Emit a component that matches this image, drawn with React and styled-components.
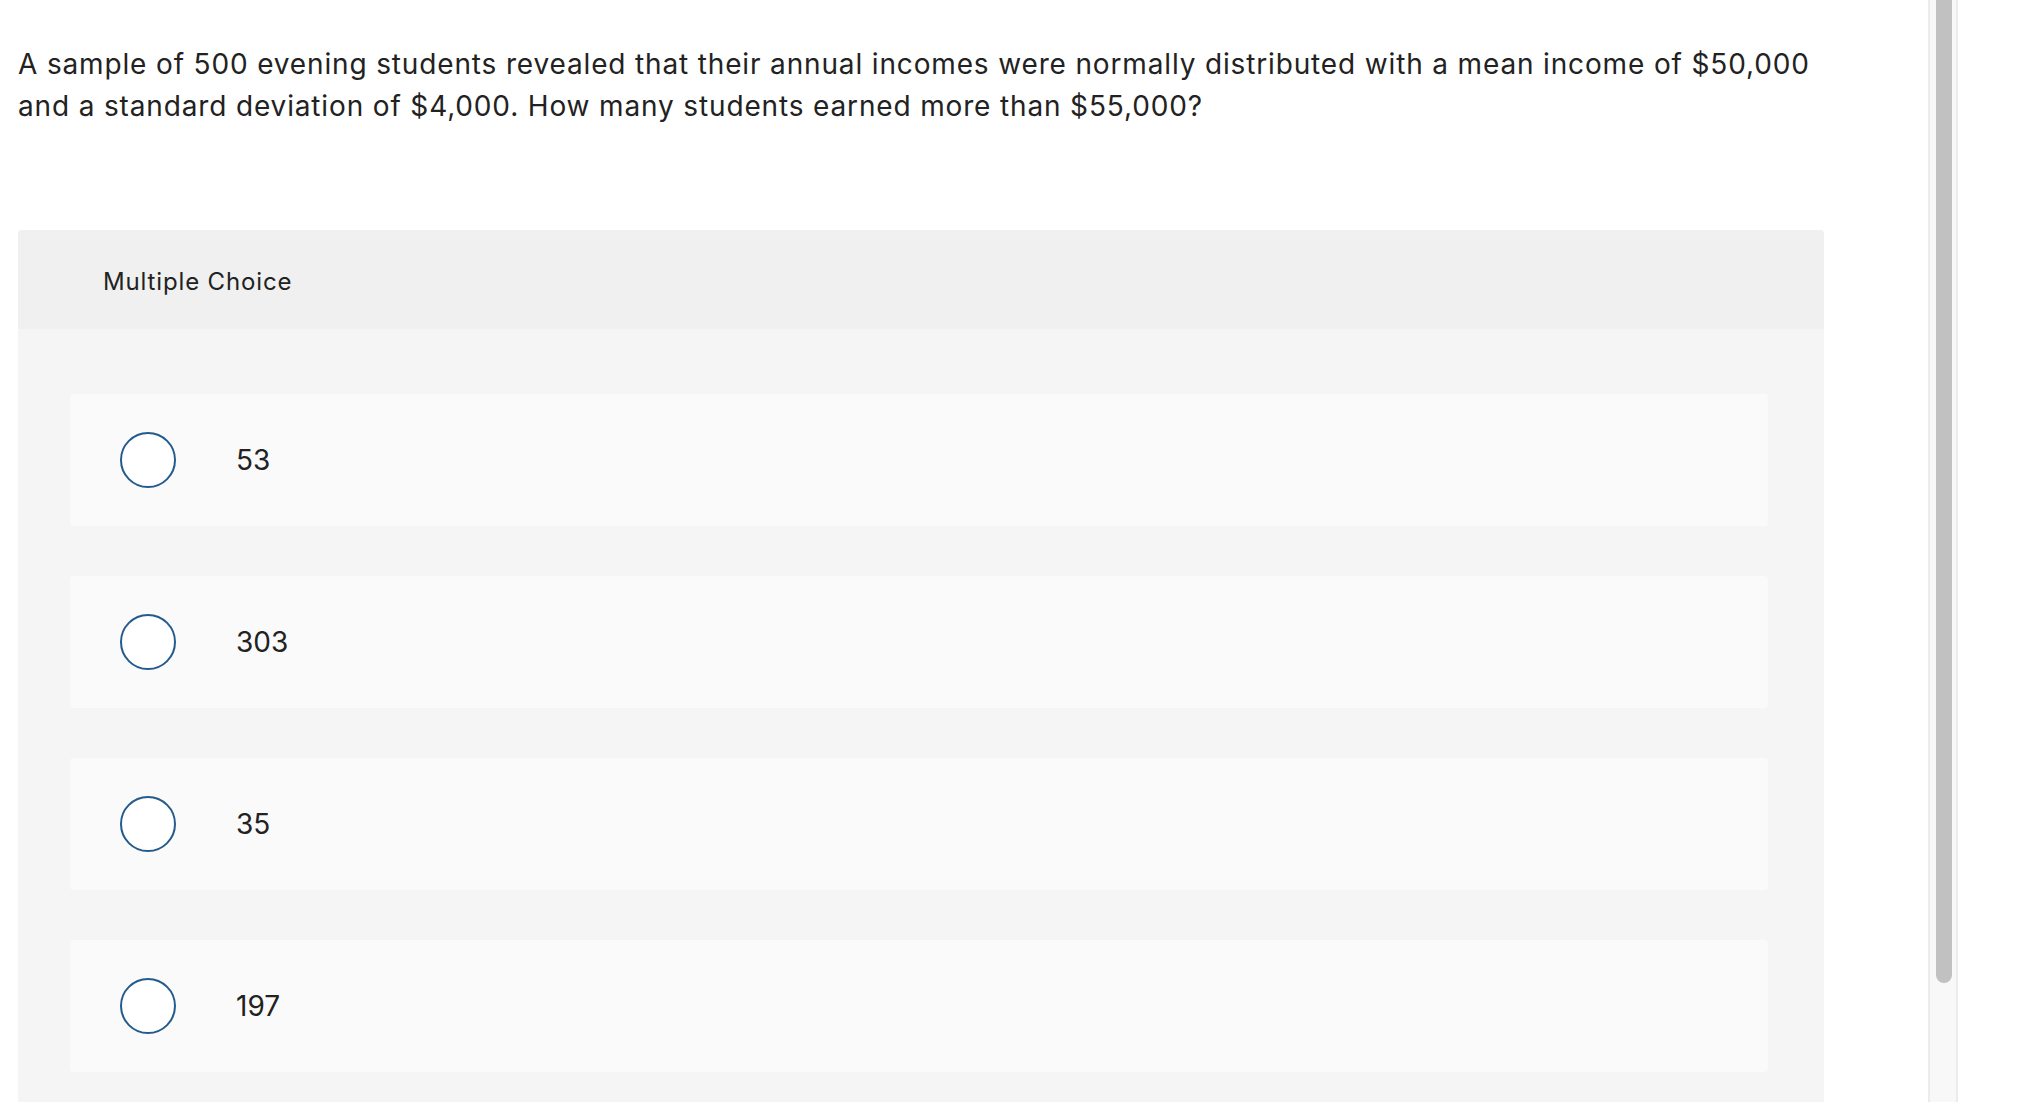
import React from "react";
import styled, { createGlobalStyle } from "styled-components";

const GlobalStyle = createGlobalStyle`
  html, body {
    margin: 0;
    padding: 0;
    background: #ffffff;
    overflow: hidden;
  }
  body {
    font-family: Inter, "Liberation Sans", Arial, sans-serif;
    color: #222222;
  }
`;

const Page = styled.div`
  display: flex;
  width: 2022px;
  height: 1102px;
  overflow: hidden;
  background: #ffffff;
`;

const Main = styled.main`
  width: 1928px;
  flex: none;
  box-sizing: border-box;
  padding: 0 104px 0 18px;
`;

const Question = styled.p`
  margin: 43px 0 0;
  font-size: 28px;
  line-height: 42px;
  letter-spacing: 0.85px;
  color: #222222;
`;

const Panel = styled.section`
  margin-top: 103px;
  background: #f5f5f5;
  border-radius: 4px 4px 0 0;
`;

const PanelHeader = styled.div`
  height: 99px;
  display: flex;
  align-items: center;
  padding: 3px 0 0 85px;
  box-sizing: border-box;
  background: #f0f0f0;
  border-radius: 4px 4px 0 0;
  font-size: 24px;
  letter-spacing: 0.85px;
  color: #222222;
`;

const Choices = styled.div`
  display: flex;
  flex-direction: column;
  gap: 50px;
  padding: 65px 56px 60px 52px;
`;

const Choice = styled.label`
  height: 132px;
  display: flex;
  align-items: center;
  gap: 60px;
  padding-left: 50px;
  background: #fafafa;
  border-radius: 4px;
  font-size: 28px;
  color: #222222;
  cursor: pointer;
`;

const Radio = styled.span`
  width: 56px;
  height: 56px;
  box-sizing: border-box;
  border: 2px solid #245b8d;
  border-radius: 50%;
  background: #ffffff;
  flex: none;
`;

const ScrollTrack = styled.div`
  width: 30px;
  height: 100%;
  flex: none;
  box-sizing: border-box;
  background: #f8f8f8;
  border-left: 2px solid #ececec;
  border-right: 2px solid #ececec;
  padding: 0 4px 0 6px;
`;

const ScrollThumb = styled.div`
  height: 983px;
  background: #c1c1c1;
  border-radius: 0 0 8px 8px;
`;

const choices = ["53", "303", "35", "197"];

export default function App() {
  return (
    <>
      <GlobalStyle />
      <Page>
        <Main>
          <Question>
            A sample of 500 evening students revealed that their annual incomes were normally
            distributed with a mean income of $50,000 and a standard deviation of $4,000. How
            many students earned more than $55,000?
          </Question>
          <Panel>
            <PanelHeader>Multiple Choice</PanelHeader>
            <Choices>
              {choices.map((c) => (
                <Choice key={c}>
                  <Radio />
                  <span>{c}</span>
                </Choice>
              ))}
            </Choices>
          </Panel>
        </Main>
        <ScrollTrack>
          <ScrollThumb />
        </ScrollTrack>
      </Page>
    </>
  );
}
